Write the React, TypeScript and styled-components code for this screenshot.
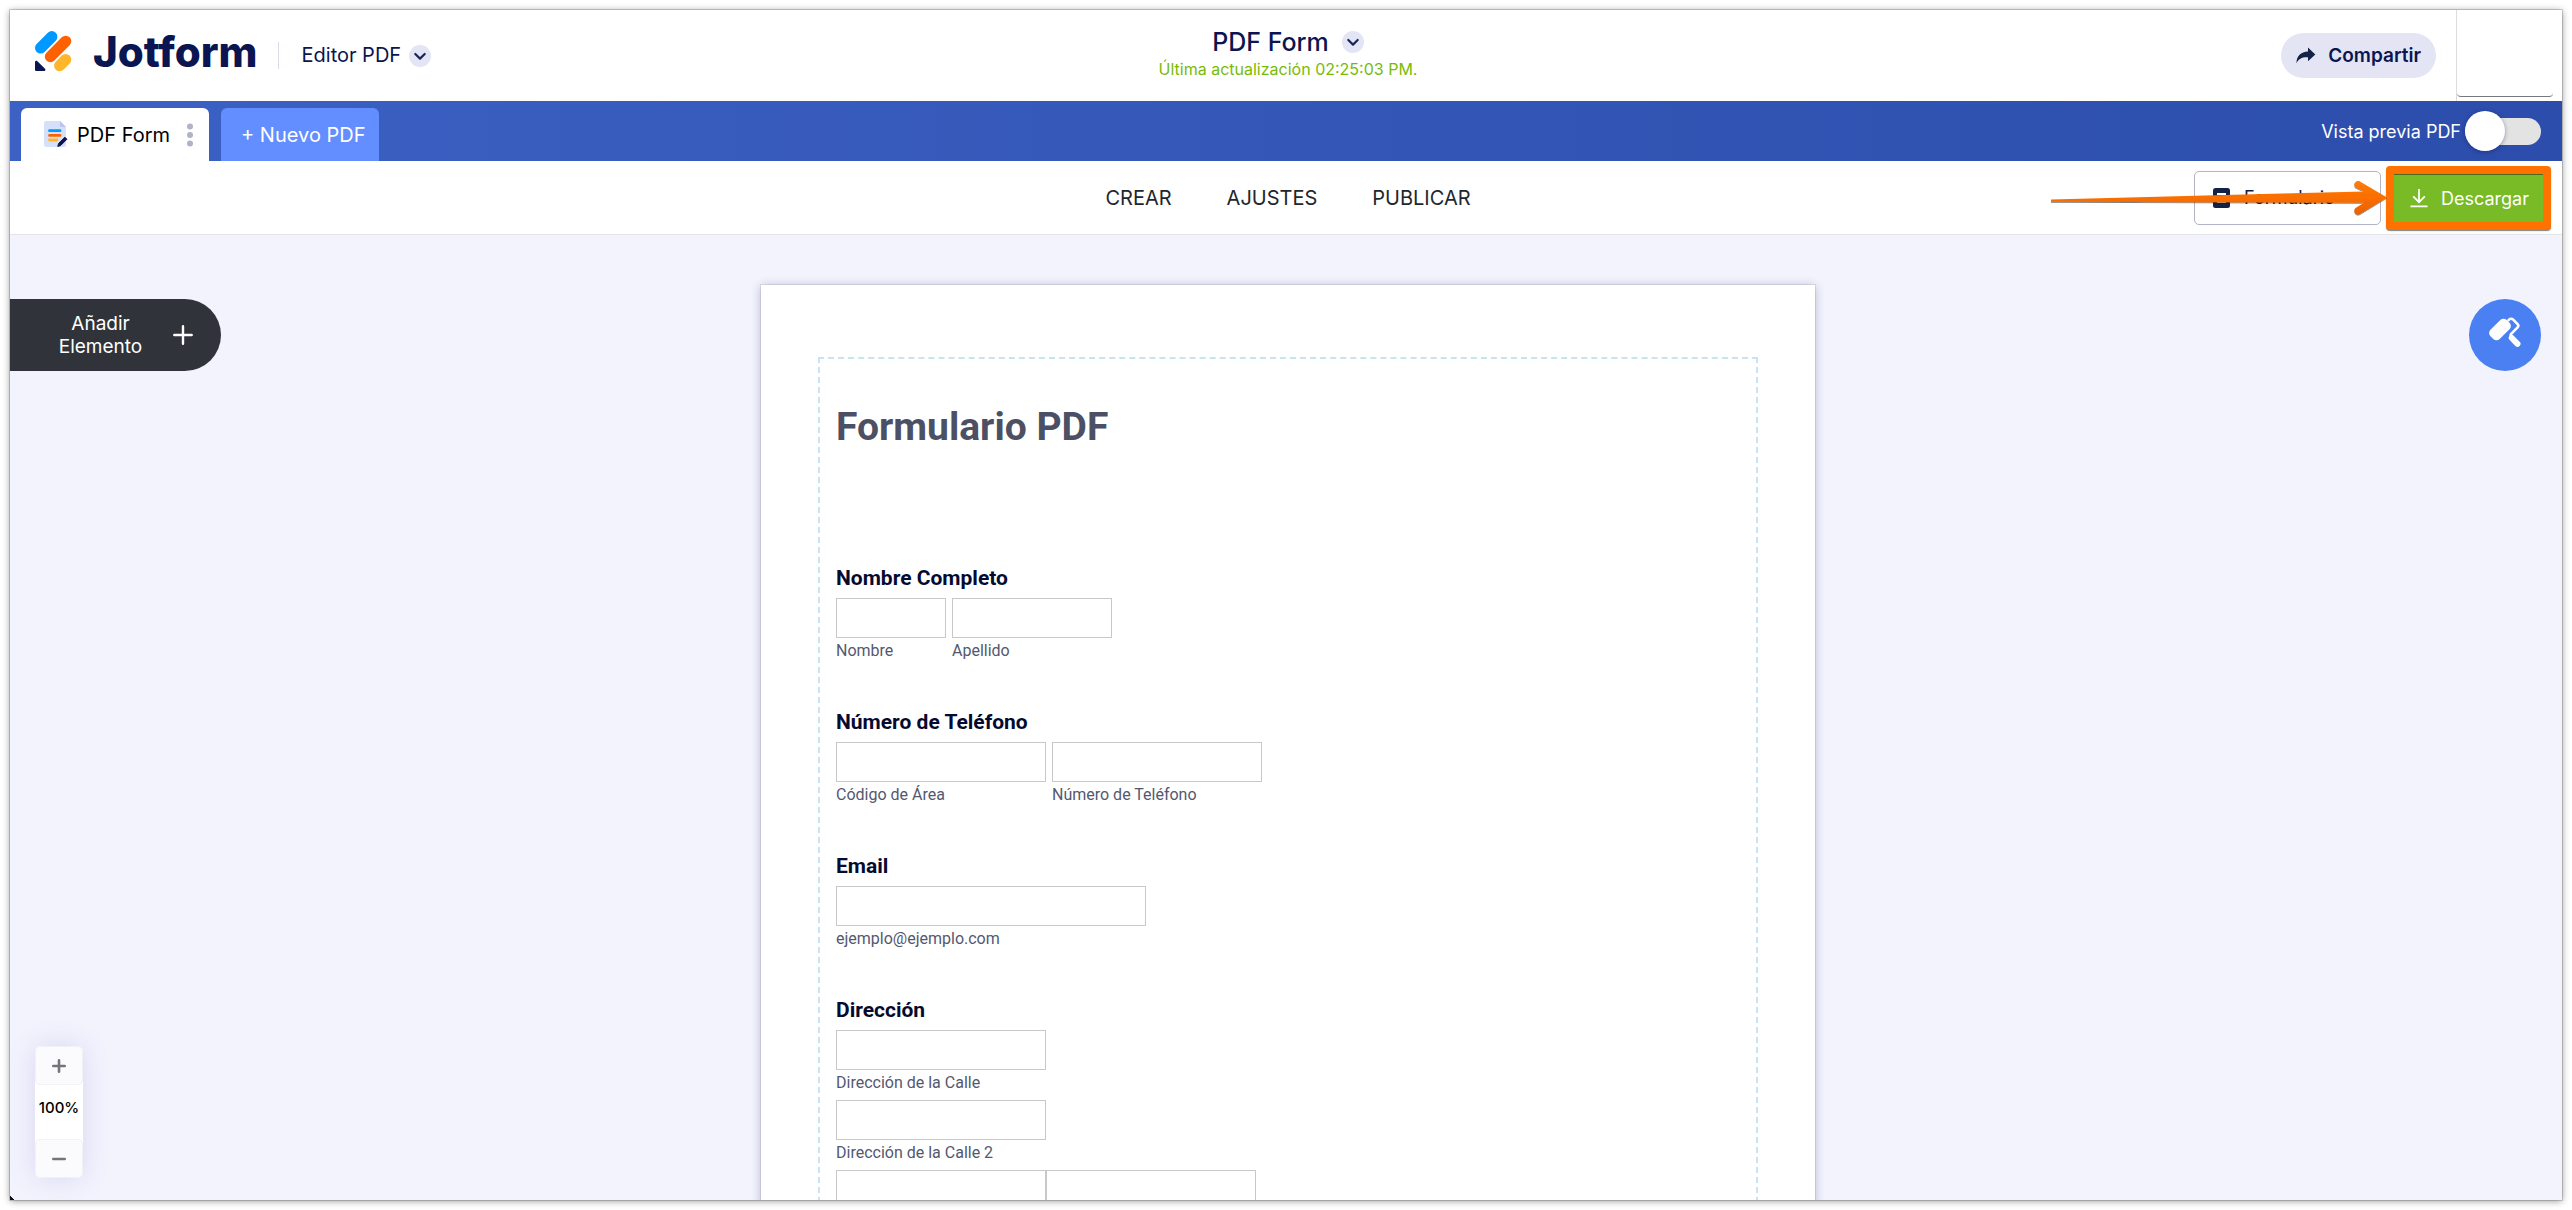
import React from "react";
import styled, { createGlobalStyle } from "styled-components";

const ui = `Inter, "Open Sans", "Liberation Sans", sans-serif`;
const doc = `Roboto, "Noto Sans", "Liberation Sans", sans-serif`;
const navy = "#0a1551";

const GlobalStyle = createGlobalStyle`
  *, *::before, *::after { box-sizing: border-box; }
  body { margin: 0; background: #fff; font-family: ${ui}; overflow: hidden; }
  button, input { font: inherit; color: inherit; }
  button { border: 0; background: none; padding: 0; cursor: pointer; }
  a { color: inherit; text-decoration: none; }
  h1, h2, p { margin: 0; }
  svg { display: block; flex: none; }
`;

const Shell = styled.div`
  height: 100vh;
  padding: 10px;
`;

const Frame = styled.div`
  position: relative;
  display: flex;
  flex-direction: column;
  height: 100%;
  background: #fff;
  overflow: hidden;
`;

const FrameShadow = styled.div`
  height: 100%;
  box-shadow: 0 0 0 1px rgba(0, 0, 0, 0.16), 0 1px 7px rgba(0, 0, 0, 0.42);
`;

const Header = styled.header`
  display: grid;
  grid-template-columns: 1fr auto 1fr;
  align-items: center;
  flex: none;
  height: 91px;
  padding-left: 4px;
`;

const Brand = styled.div`
  display: flex;
  align-items: center;
  padding-left: 21px;
`;

const LogoLink = styled.a`
  display: flex;
  align-items: center;
  gap: 21px;
  padding-bottom: 8px;
`;

const Wordmark = styled.span`
  color: ${navy};
  font-size: 42px;
  font-weight: 800;
  line-height: 48px;
`;

const Product = styled.button`
  display: flex;
  align-items: center;
  gap: 8px;
  margin-left: 20px;
  padding-left: 23px;
  border-left: 1px solid #dadcec;
  color: ${navy};
  font-size: 20px;
  line-height: 27px;
`;

const TitleBlock = styled.div`
  display: flex;
  flex-direction: column;
  align-items: center;
  padding-bottom: 6px;
`;

const TitleButton = styled.button`
  display: flex;
  align-items: center;
  gap: 13px;
  color: ${navy};
  font-size: 25px;
  font-weight: 500;
  line-height: 32px;
`;

const Saved = styled.p`
  color: #78bb07;
  font-size: 16px;
  line-height: 22px;
`;

const Account = styled.div`
  display: flex;
  align-items: center;
  justify-content: flex-end;
  gap: 20px;
  align-self: stretch;
`;

const Share = styled.button`
  display: flex;
  align-items: center;
  gap: 12px;
  height: 45px;
  padding: 0 15px;
  border-radius: 23px;
  background: #e3e5f5;
  color: ${navy};
  font-size: 19px;
  font-weight: 600;
`;

const AvatarSlot = styled.div`
  display: flex;
  align-self: stretch;
  padding: 0 9px 4px 0;
  border-left: 1px solid #dcdce0;
`;

const Avatar = styled.button`
  width: 96px;
  height: 100%;
  border-bottom: 1px solid #77777c;
  border-radius: 4px;
  background: #fff;
`;

const TabBar = styled.div`
  display: flex;
  align-items: flex-end;
  flex: none;
  gap: 12px;
  height: 60px;
  padding: 0 21px 0 11px;
  background: linear-gradient(90deg, #3c61c4, #2c4dab);
`;

const Tab = styled.div`
  display: flex;
  align-items: center;
  height: 53px;
  padding: 0 16px 0 23px;
  border-radius: 6px 6px 0 0;
  background: #fff;
  color: #000;
  font-size: 20px;
`;

const TabName = styled.button`
  display: flex;
  align-items: center;
  gap: 9px;
`;

const TabMenu = styled.button`
  margin-left: 17px;
`;

const NewTab = styled.button`
  height: 53px;
  padding: 0 13px 0 20px;
  border-radius: 6px 6px 0 0;
  background: #628eff;
  color: #fff;
  font-size: 20px;
`;

const Preview = styled.label`
  display: flex;
  align-items: center;
  align-self: center;
  gap: 4px;
  margin-left: auto;
  color: #fff;
  font-size: 18px;
`;

const Switch = styled.input`
  appearance: none;
  position: relative;
  width: 76px;
  height: 27px;
  margin: 0;
  border-radius: 14px;
  background: #e3e3e3;
  &::before {
    content: "";
    position: absolute;
    top: -7px;
    left: 0;
    width: 40px;
    height: 40px;
    border-radius: 50%;
    background: #fff;
    box-shadow: 0 1px 4px rgba(10, 21, 81, 0.4);
  }
  &:checked::before { left: 36px; }
`;

const Toolbar = styled.div`
  display: grid;
  grid-template-columns: 1fr auto 1fr;
  align-items: center;
  flex: none;
  height: 74px;
  padding-left: 4px;
  border-bottom: 1px solid #e3e3e8;
`;

const Nav = styled.nav`
  grid-column: 2;
  display: flex;
  gap: 55px;
  color: #23262d;
  font-size: 20px;
`;

const Actions = styled.div`
  position: relative;
  display: flex;
  align-items: center;
  justify-content: flex-end;
  gap: 5px;
  padding-right: 11px;
`;

const FormButton = styled.button`
  display: flex;
  align-items: center;
  gap: 14px;
  width: 187px;
  height: 54px;
  padding-left: 18px;
  border: 1px solid #b3b3c8;
  border-radius: 5px;
  color: #0f1c3f;
  font-size: 18px;
`;

const Callout = styled.div`
  border: 8px solid #ff7200;
  border-radius: 4px;
  background: #ff7200;
  box-shadow: 0 1px 1px rgba(0, 0, 0, 0.5);
`;

const Download = styled.button`
  display: flex;
  align-items: center;
  gap: 13px;
  height: 48px;
  width: 149px;
  padding-left: 16px;
  border-top: 1px solid #4d6a1a;
  background: #78bb27;
  color: #fff;
  font-size: 18px;
`;

const Arrow = styled.svg`
  position: absolute;
  right: 174px;
  top: 12px;
`;

const Canvas = styled.main`
  flex: 1;
  min-height: 0;
  overflow: hidden;
  padding: 50px 0 0 4px;
  background: #f3f3fe;
`;

const Page = styled.article`
  width: 1054px;
  max-width: 100%;
  min-height: 1480px;
  margin: 0 auto;
  padding: 72px 57px;
  background: #fff;
  box-shadow: 0 0 0 1px rgba(60, 60, 110, 0.1), 0 1px 9px rgba(50, 50, 100, 0.32);
`;

const FormArea = styled.form`
  min-height: 1336px;
  padding: 44px 16px;
  border: 2px dashed #c8e4f3;
  font-family: ${doc};
`;

const FormTitle = styled.h1`
  margin-bottom: 115px;
  color: #4b5065;
  font-size: 39px;
  font-weight: 700;
  line-height: 48px;
`;

const Question = styled.fieldset`
  margin: 0 0 48px;
  padding: 0;
  border: 0;
`;

const QuestionLabel = styled.legend`
  margin-bottom: 8px;
  padding: 0;
  color: #050a30;
  font-size: 21px;
  font-weight: 700;
  line-height: 24px;
`;

const FieldRow = styled.div<{ $gap: number }>`
  display: flex;
  gap: ${(p) => p.$gap}px;
  & + & { margin-top: 6px; }
`;

const Field = styled.label<{ $width: number }>`
  display: flex;
  flex-direction: column-reverse;
  gap: 2px;
  width: ${(p) => p.$width}px;
  color: #535870;
  font-size: 16px;
  line-height: 22px;
`;

const Box = styled.input`
  width: 100%;
  height: 40px;
  padding: 0 8px;
  border: 1px solid #c8c8c8;
  border-radius: 0;
  background: #fff;
`;

const AddElement = styled.button`
  position: absolute;
  left: 0;
  top: 289px;
  display: flex;
  align-items: center;
  gap: 30px;
  height: 72px;
  width: 211px;
  padding-left: 48px;
  border-radius: 0 36px 36px 0;
  background: #31333b;
  color: #fff;
  font-size: 19px;
  line-height: 23px;
`;

const AddText = styled.span`
  width: 85px;
  display: flex;
  flex-direction: column;
  align-items: center;
`;

const Designer = styled.button`
  position: absolute;
  right: 21px;
  top: 289px;
  display: grid;
  place-items: center;
  width: 72px;
  height: 72px;
  padding-bottom: 6px;
  border-radius: 50%;
  background: #4a80f2;
`;

const Zoom = styled.div`
  position: absolute;
  left: 25px;
  bottom: 22px;
  display: flex;
  flex-direction: column;
  width: 48px;
  border-radius: 5px;
  background: #fff;
  box-shadow: 0 0 26px rgba(84, 84, 160, 0.17);
`;

const ZoomButton = styled.button`
  display: grid;
  place-items: center;
  height: 39px;
  border: 1px solid #f1f1f6;
  border-radius: 5px;
  background: #fbfbfe;
`;

const ZoomValue = styled.output`
  height: 54px;
  color: #000;
  font-size: 15px;
  font-weight: 500;
  line-height: 46px;
  text-align: center;
`;

const Corner = styled.div`
  position: absolute;
  left: 0;
  bottom: 0;
  width: 4px;
  height: 5px;
  background: linear-gradient(to top right, #111 50%, transparent 50%);
`;

const Chevron = () => (
  <svg width="22" height="22" viewBox="0 0 22 22">
    <circle cx="11" cy="11" r="11" fill="#e3e5f5" />
    <path d="M6.3 9 11 13.6 15.7 9" fill="none" stroke="#1b2559" strokeWidth="2.2" strokeLinecap="round" strokeLinejoin="round" />
  </svg>
);

const Logo = () => (
  <svg width="37" height="41" viewBox="0 0 37 41">
    <g strokeLinecap="round" strokeWidth="11.2">
      <path d="M5.6 17 16.800 5.700" stroke="#0099ff" />
      <path d="M15.400 25.600 30.700 10.300" stroke="#ff6100" />
      <path d="M24.700 34.700 30.700 28.500" stroke="#ffb629" />
    </g>
    <path d="M0 31.200c0-1.300 1.500-1.900 2.400-1L10 37.700c.9.9.3 2.400-1 2.400H1.600C.7 40.100 0 39.400 0 38.500Z" fill={navy} />
  </svg>
);

const DocIcon = () => (
  <svg width="24" height="27" viewBox="0 0 24 27">
    <path d="M2.500 0H16l6 6v17.500a2.500 2.500 0 0 1-2.500 2.500h-17A2.500 2.500 0 0 1 0 23.500v-21A2.500 2.500 0 0 1 2.500 0Z" fill="#d5e0fa" />
    <path d="M16 0l6 6h-4.500A1.500 1.500 0 0 1 16 4.500Z" fill="#b9c5ee" />
    <g strokeWidth="2.800" strokeLinecap="round">
      <path d="M5.500 9.700H16" stroke="#0099ff" />
      <path d="M5.500 14.400H16" stroke="#ff6100" />
      <path d="M5.500 19H13" stroke="#ffb629" />
    </g>
    <path d="M13.800 25.400l.8-3L20.900 16.200l2 2-6.300 6.400Z" fill={navy} stroke={navy} strokeLinejoin="round" />
  </svg>
);

const DotsIcon = () => (
  <svg width="6" height="24" viewBox="0 0 6 24" fill="#b0b2c9">
    <circle cx="3" cy="3.500" r="3" />
    <circle cx="3" cy="12" r="3" />
    <circle cx="3" cy="20.500" r="3" />
  </svg>
);

const ShareIcon = () => (
  <svg width="20" height="17" viewBox="0 0 20 17">
    <path d="M12 0.600 19.300 7.400 12 14.200V10.300C6 10 2.700 11.700.5 16.200.3 9 5 4.700 12 4.400Z" fill="#142247" />
  </svg>
);

const FormIcon = () => (
  <svg width="17" height="20" viewBox="0 0 17 20">
    <rect width="17" height="20" rx="2.500" fill="#142247" />
    <path d="M4 6h9M4 14h9" stroke="#fff" strokeWidth="2" />
  </svg>
);

const DownloadIcon = () => (
  <svg width="18" height="20" viewBox="0 0 18 20" fill="none" stroke="#fff" strokeWidth="1.800">
    <path d="M9 1v12.600M3.200 8.400 9 14.200l5.800-5.800M.5 18.400h17" />
  </svg>
);

const PlusIcon = () => (
  <svg width="20" height="20" viewBox="0 0 20 20" stroke="#fff" strokeWidth="2.400" strokeLinecap="round">
    <path d="M10 1.300v17.400M1.300 10h17.400" />
  </svg>
);

const RollerIcon = () => (
  <svg width="32" height="31" viewBox="0 0 32 31" fill="none" stroke="#fff" strokeLinecap="round" strokeLinejoin="round">
    <rect x="-0.500" y="6" width="23" height="13" rx="4.500" transform="rotate(-45 11 12.500)" fill="#fff" stroke="none" />
    <path d="M19.500 3.200C21 1.400 22.700 1.200 24.200 2.700L28.600 7.100C29.700 8.200 29.700 9.300 28.600 10.400L21.700 17.300V20" strokeWidth="2.600" />
    <path d="M22.800 21 28.500 26.800" strokeWidth="6" />
  </svg>
);

const CalloutArrow = () => (
  <Arrow width="338" height="42" viewBox="0 0 338 42" aria-hidden="true">
    <defs>
      <linearGradient id="shaft" x1="0" y1="0" x2="0" y2="1">
        <stop offset="0" stopColor="#ff7a0a" />
        <stop offset="0.5" stopColor="#fa6f00" />
        <stop offset="1" stopColor="#e86100" />
      </linearGradient>
      <filter id="arrowShadow" x="-5%" y="-20%" width="110%" height="150%">
        <feDropShadow dx="0" dy="1" stdDeviation="0.700" floodOpacity="0.500" />
      </filter>
    </defs>
    <path
      d="M1 21.500 314 13.500 305.500 9.500C302.500 6.500 305.500 1.800 309.500 3.200L337 19.500 309.500 36.200C305.500 37.800 302.500 33 305.500 30L314 24.800 1 23.700Z"
      fill="url(#shaft)"
      filter="url(#arrowShadow)"
    />
  </Arrow>
);

type FieldSpec = { name: string; caption?: string; width: number };

const questions: { label: string; gap: number; rows: FieldSpec[][] }[] = [
  {
    label: "Nombre Completo",
    gap: 6,
    rows: [[{ name: "nombre", caption: "Nombre", width: 110 }, { name: "apellido", caption: "Apellido", width: 160 }]],
  },
  {
    label: "Número de Teléfono",
    gap: 6,
    rows: [[{ name: "area", caption: "Código de Área", width: 210 }, { name: "telefono", caption: "Número de Teléfono", width: 210 }]],
  },
  { label: "Email", gap: 6, rows: [[{ name: "email", caption: "ejemplo@ejemplo.com", width: 310 }]] },
  {
    label: "Dirección",
    gap: 0,
    rows: [
      [{ name: "calle", caption: "Dirección de la Calle", width: 210 }],
      [{ name: "calle2", caption: "Dirección de la Calle 2", width: 210 }],
      [{ name: "ciudad", width: 210 }, { name: "estado", width: 210 }],
    ],
  },
];

export default function App() {
  return (
    <Shell>
      <GlobalStyle />
      <FrameShadow>
        <Frame>
          <Header>
            <Brand>
              <LogoLink href="#">
                <Logo />
                <Wordmark>Jotform</Wordmark>
              </LogoLink>
              <Product type="button">
                Editor PDF
                <Chevron />
              </Product>
            </Brand>
            <TitleBlock>
              <TitleButton type="button">
                PDF Form
                <Chevron />
              </TitleButton>
              <Saved>Última actualización 02:25:03 PM.</Saved>
            </TitleBlock>
            <Account>
              <Share type="button">
                <ShareIcon />
                Compartir
              </Share>
              <AvatarSlot>
                <Avatar type="button" />
              </AvatarSlot>
            </Account>
          </Header>

          <TabBar>
            <Tab>
              <TabName type="button">
                <DocIcon />
                PDF Form
              </TabName>
              <TabMenu type="button">
                <DotsIcon />
              </TabMenu>
            </Tab>
            <NewTab type="button">+ Nuevo PDF</NewTab>
            <Preview>
              Vista previa PDF
              <Switch type="checkbox" role="switch" />
            </Preview>
          </TabBar>

          <Toolbar>
            <Nav>
              <a href="#crear">CREAR</a>
              <a href="#ajustes">AJUSTES</a>
              <a href="#publicar">PUBLICAR</a>
            </Nav>
            <Actions>
              <FormButton type="button">
                <FormIcon />
                Formulario
              </FormButton>
              <Callout>
                <Download type="button">
                  <DownloadIcon />
                  Descargar
                </Download>
              </Callout>
              <CalloutArrow />
            </Actions>
          </Toolbar>

          <Canvas>
            <Page>
              <FormArea>
                <FormTitle>Formulario PDF</FormTitle>
                {questions.map((q) => (
                  <Question key={q.label}>
                    <QuestionLabel>{q.label}</QuestionLabel>
                    {q.rows.map((row, i) => (
                      <FieldRow key={i} $gap={q.gap}>
                        {row.map((f) => (
                          <Field key={f.name} $width={f.width}>
                            {f.caption}
                            <Box type="text" name={f.name} />
                          </Field>
                        ))}
                      </FieldRow>
                    ))}
                  </Question>
                ))}
              </FormArea>
            </Page>
          </Canvas>

          <AddElement type="button">
            <AddText>
              <span>Añadir</span>
              <span>Elemento</span>
            </AddText>
            <PlusIcon />
          </AddElement>
          <Designer type="button">
            <RollerIcon />
          </Designer>
          <Zoom>
            <ZoomButton type="button">
              <svg width="14" height="14" viewBox="0 0 14 14" stroke="#757579" strokeWidth="2.600" strokeLinecap="round">
                <path d="M7 1.300v11.400M1.300 7h11.400" />
              </svg>
            </ZoomButton>
            <ZoomValue>100%</ZoomValue>
            <ZoomButton type="button">
              <svg width="14" height="14" viewBox="0 0 14 14" stroke="#757579" strokeWidth="2.600" strokeLinecap="round">
                <path d="M1.300 7h11.400" />
              </svg>
            </ZoomButton>
          </Zoom>
          <Corner />
        </Frame>
      </FrameShadow>
    </Shell>
  );
}
